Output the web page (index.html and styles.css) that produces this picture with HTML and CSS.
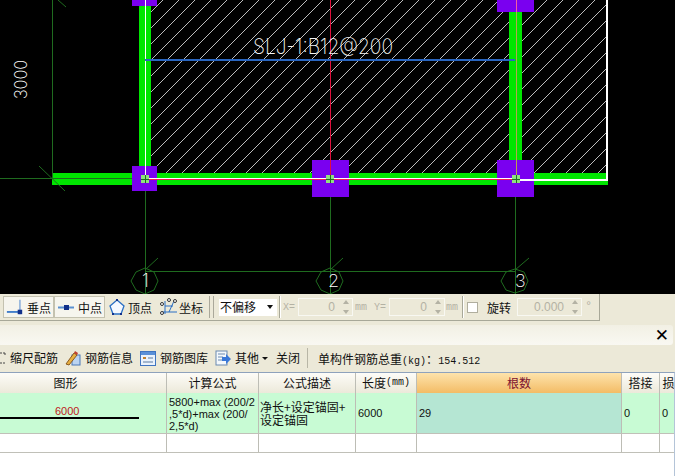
FILE: index.html
```html
<!DOCTYPE html>
<html lang="zh-CN">
<head>
<meta charset="utf-8">
<title>钢筋编辑</title>
<link rel="stylesheet" href="styles.css">
</head>
<body>
<div class="app">
  <svg class="cad" width="675" height="294" viewBox="0 0 675 294" xmlns="http://www.w3.org/2000/svg">
    <defs>
      <pattern id="hatch" width="16" height="16" patternUnits="userSpaceOnUse">
        <path d="M0 3 L3 0 M3 16 L16 3" stroke="#bcbcbc" stroke-width="1" fill="none"/>
      </pattern>
    </defs>
    <rect width="675" height="294" fill="#000"/>
    <rect x="151" y="0" width="456" height="173" fill="url(#hatch)"/>
    <rect x="139" y="0" width="12" height="180" fill="#00e600"/>
    <rect x="509" y="0" width="13" height="180" fill="#00e600"/>
    <rect x="52" y="173" width="556" height="12" fill="#00e600"/>
    <g stroke="#1f6b1f" stroke-width="1" fill="none" shape-rendering="crispEdges">
      <path d="M52.500 0V179M0 178.500H145M145.500 179V294M330.500 179V294M515.500 179V294M145 271.500H516"/>
    </g>
    <g stroke="#1f6b1f" stroke-width="1" fill="none">
      <path d="M39 166L65 191M58 0L66 7M145 270L158 258M330 270L343 258M515 270L529 258"/>
      <path d="M145 268l9 4 4 9-4 9-9 4-9-4-5-9 5-9zM330 268l9 4 4 9-4 9-9 4-9-4-5-9 5-9zM515 269l9 3 4 9-4 9-9 3-9-3-5-9 5-9z"/>
    </g>
    <rect x="132" y="0" width="25" height="6" fill="#7a00f0"/>
    <rect x="497" y="0" width="37" height="12" fill="#7a00f0"/>
    <rect x="132" y="166" width="25" height="25" fill="#7a00f0"/>
    <rect x="312" y="160" width="37" height="37" fill="#7a00f0"/>
    <rect x="497" y="160" width="37" height="37" fill="#7a00f0"/>
    <g shape-rendering="crispEdges" fill="none">
      <path d="M145.500 0V179" stroke="#fff"/>
      <path d="M330.500 0V179" stroke="#e0103c"/>
      <path d="M516.500 12V179" stroke="#b8a050"/>
      <path d="M516.500 0V12" stroke="#f060a0"/>
      <path d="M145 179.500H516" stroke="#f01850"/>
      <path d="M145 178.500H516" stroke="#fff"/>
      <path d="M520 179.500H608" stroke="#fff" stroke-width="2"/>
      <path d="M607 0V180" stroke="#fff" stroke-width="2"/>
      <path d="M145 60H515" stroke="#2a66c0" stroke-width="2"/>
    </g>
    <g fill="#90e080">
      <rect x="141" y="175" width="8" height="8"/>
      <rect x="326" y="175" width="8" height="8"/>
      <rect x="512" y="175" width="8" height="8"/>
    </g>
    <path d="M145 175V183M141 179H149M330 175V183M326 179H334M516 175V183M512 179H520" stroke="#1f6b1f" stroke-width="1" shape-rendering="crispEdges"/>
    <text class="cad-label" x="253" y="54" textLength="140" lengthAdjust="spacingAndGlyphs">SLJ-1:B12@200</text>
    <text class="cad-dim" transform="translate(27 99) rotate(-90)" textLength="39" lengthAdjust="spacingAndGlyphs">3000</text>
    <text class="cad-axis" x="142" y="287">1</text>
    <text class="cad-axis" x="328" y="287">2</text>
    <text class="cad-axis" x="515" y="287">3</text>
  </svg>

  <div class="snapbar">
    <div class="snaps">
      <button class="snap pressed">
        <svg width="20" height="18" viewBox="0 0 20 18"><path d="M1 14.500H17" stroke="#3a78c8" stroke-width="2"/><path d="M15.500 1V17" stroke="#7aa4d8" stroke-width="1.500"/><rect x="13" y="12" width="5" height="5" fill="#12308a"/></svg>
        <span>垂点</span>
      </button>
      <button class="snap pressed">
        <svg width="18" height="18" viewBox="0 0 18 18"><path d="M1 9.500H17" stroke="#5a90d0" stroke-width="2"/><rect x="7" y="7" width="5" height="5" fill="#12308a"/></svg>
        <span>中点</span>
      </button>
      <button class="snap spaced">
        <svg width="16" height="18" viewBox="0 0 16 18"><path d="M8 2L15 8 12 16H4L1 8z" fill="#f4f8ff" stroke="#2a6fc4" stroke-width="1.300"/><rect x="7" y="1" width="2" height="2" fill="#12308a"/><rect x="3" y="15" width="2" height="2" fill="#12308a"/><rect x="11" y="15" width="2" height="2" fill="#12308a"/></svg>
        <span>顶点</span>
      </button>
      <button class="snap spaced tight">
        <svg width="18" height="18" viewBox="0 0 18 18"><path d="M5 3V16M2 14H17M9 14L14 3M5 8H13" stroke="#2a6fc4" fill="none"/><circle cx="2" cy="6" r="1.500" fill="#fff" stroke="#333"/><circle cx="9" cy="2" r="1.500" fill="#fff" stroke="#333"/><circle cx="15" cy="3" r="1.500" fill="#fff" stroke="#333"/><circle cx="2" cy="15" r="1.500" fill="#fff" stroke="#333"/></svg>
        <span>坐标</span>
      </button>
    </div>
    <i class="grip"></i>
    <div class="combo"><span>不偏移</span><b class="combo-arrow"></b></div>
    <i class="sep"></i>
    <span class="dis lbl">X=</span>
    <div class="spin s-x"><span>0</span><em class="updown"></em></div>
    <span class="dis mm mm-a">mm</span>
    <span class="dis lbl">Y=</span>
    <div class="spin s-y"><span>0</span><em class="updown"></em></div>
    <span class="dis mm mm-b">mm</span>
    <i class="sep"></i>
    <i class="check"></i>
    <span class="rot">旋转</span>
    <div class="spin s-r"><span>0.000</span><em class="updown"></em></div>
    <span class="dis deg">°</span>
  </div>

  <div class="titlestrip"><span class="close">✕</span></div>

  <div class="actions">
    <svg class="ico-cut" width="7" height="14" viewBox="0 0 7 14"><path d="M0 2H5M5 2V5M0 12H5" stroke="#444" stroke-dasharray="2 1" fill="none"/></svg>
    <span class="act">缩尺配筋</span>
    <svg class="ico" width="16" height="16" viewBox="0 0 16 16"><rect x="7" y="5" width="8" height="10" fill="#bcd4f0" stroke="#4a78b8"/><path d="M1 14L9 3l3 2-8 10z" fill="#e8b040" stroke="#8a5a20"/><path d="M10 1l3 2-1 2-3-2z" fill="#c04030"/></svg>
    <span class="act">钢筋信息</span>
    <svg class="ico" width="16" height="15" viewBox="0 0 16 15"><rect x=".5" y=".5" width="15" height="14" fill="#eaf2fc" stroke="#3f74c0"/><rect x="1" y="1" width="14" height="3" fill="#5a90d8"/><rect x="3" y="6" width="3" height="2" fill="#c08030"/><path d="M3 11H13M8 7H13" stroke="#5a7aa0"/></svg>
    <span class="act">钢筋图库</span>
    <svg class="ico" width="16" height="16" viewBox="0 0 16 16"><rect x="1" y="1" width="11" height="14" fill="#f4f8fc" stroke="#6a8ab0"/><path d="M3 4H10M3 7H8M3 10H7" stroke="#6a8ab0"/><path d="M7 7H11V4L16 9 11 14V11H7z" fill="#3a78d8"/></svg>
    <span class="act">其他</span>
    <b class="drop"></b>
    <span class="act">关闭</span>
    <i class="sep2"></i>
    <span class="total">单构件钢筋总重<small>(kg)</small>：<small>154.512</small></span>
  </div>

  <div class="grid-wrap">
    <div class="row head">
      <div class="cell c0">图形</div>
      <div class="cell c1">计算公式</div>
      <div class="cell c2">公式描述</div>
      <div class="cell c3">长度<small>(mm)</small></div>
      <div class="cell c4 hot">根数</div>
      <div class="cell c5">搭接</div>
      <div class="cell c6">损耗</div>
    </div>
    <div class="row data">
      <div class="cell c0 shape"><span class="dim">6000</span><i class="bar"></i></div>
      <div class="cell c1 formula">5800+max (200/2<br>,5*d)+max (200/<br>2,5*d)</div>
      <div class="cell c2 desc">净长+设定锚固+<br>设定锚固</div>
      <div class="cell c3">6000</div>
      <div class="cell c4 active">29</div>
      <div class="cell c5">0</div>
      <div class="cell c6">0</div>
    </div>
    <div class="row empty">
      <div class="cell c0"></div>
      <div class="cell c1"></div>
      <div class="cell c2"></div>
      <div class="cell c3"></div>
      <div class="cell c4"></div>
      <div class="cell c5"></div>
      <div class="cell c6"></div>
    </div>
  </div>
</div>
</body>
</html>
```
FILE: styles.css
```css
* { box-sizing: border-box; }
html, body { margin: 0; padding: 0; background: #fff; }
body {
  width: 675px;
  height: 476px;
  overflow: hidden;
  font-family: "Noto Sans CJK SC", "Liberation Sans", sans-serif;
  font-size: 12px;
  color: #111;
}
.app { width: 675px; height: 476px; display: flex; flex-direction: column; background: #ece9d8; overflow: hidden; }

.cad { display: block; flex: none; }
.cad-label { font-family: "Inter", "DejaVu Sans", sans-serif; font-weight: 200; font-size: 21px; fill: #f4f4f4; }
.cad-dim { font-family: "Inter", "DejaVu Sans", sans-serif; font-weight: 200; font-size: 18px; fill: #fff; }
.cad-axis { font-family: "Inter", "DejaVu Sans", sans-serif; font-weight: 200; font-size: 18px; fill: #fff; }

.snapbar {
  flex: none;
  width: 600px;
  height: 27px;
  display: flex;
  align-items: center;
  padding-left: 3px;
  background: #ece9d8;
  border-right: 1px solid #a8a898;
  border-bottom: 1px solid #a8a898;
}
.snaps { display: flex; align-items: center; }
.snap {
  display: flex;
  align-items: center;
  gap: 3px;
  height: 22px;
  padding: 0 2px;
  border: 0;
  background: none;
  font: inherit;
  color: #111;
  white-space: nowrap;
}
.snap.pressed { width: 51px; background: #f6f5ee; border: 1px solid #c4c2b0; }
.snap.spaced { margin-left: 2px; }
.snap.tight { gap: 1px; margin-left: 4px; }
.grip { width: 5px; height: 22px; margin: 0 5px 0 4px; border-left: 1px solid #aaa89a; border-right: 1px solid #aaa89a; }
.combo { width: 58px; height: 17px; display: flex; align-items: center; background: #fff; }
.combo span { flex: 1; line-height: 14px; padding-left: 1px; }
.combo-arrow { width: 0; height: 0; margin-right: 4px; border: 3px solid transparent; border-top: 4px solid #111; border-bottom: 0; }
.sep { width: 2px; height: 22px; margin: 0 2px; border-left: 1px solid #a8a898; border-right: 1px solid #fff; }
.dis { color: #b4b2a4; font-family: "Liberation Mono", monospace; white-space: nowrap; }
.lbl { width: 15px; font-size: 10px; }
.mm { padding-left: 2px; font-size: 10px; }
.mm-a { width: 21px; }
.mm-b { width: 15px; padding-left: 1px; }
.deg { width: 14px; padding-left: 3px; }
.spin { height: 18px; display: flex; align-items: center; justify-content: flex-end; color: #b4b2a4; border: 1px solid #f8f8f2; font-family: "Liberation Sans", sans-serif; font-size: 12px; }
.s-x { width: 55px; }
.s-y { width: 56px; }
.s-r { width: 65px; margin-left: 6px; }
.updown { position: relative; width: 7px; height: 12px; margin: 0 2px 0 8px; }
.updown::before, .updown::after { content: ""; position: absolute; left: 0; border: 3px solid transparent; }
.updown::before { top: -1px; border-bottom: 4px solid #b4b2a4; border-top: 0; }
.updown::after { bottom: -1px; border-top: 4px solid #b4b2a4; border-bottom: 0; }
.sep + .check { margin-left: 1px; }
.check { width: 11px; height: 11px; margin-right: 9px; background: #fff; border: 1px solid #b0ae9e; }
.rot { width: 24px; white-space: nowrap; }

.titlestrip {
  flex: none;
  height: 20px;
  margin: 4px 2px 0 0;
  display: flex;
  align-items: center;
  justify-content: flex-end;
  padding-right: 4px;
  border-radius: 0 3px 3px 0;
  background: linear-gradient(#f2f0e4, #f9f8f2);
}
.close { font-family: "DejaVu Sans", sans-serif; font-size: 17px; line-height: 20px; font-weight: 700; color: #000; }

.actions { flex: none; height: 26px; display: flex; align-items: center; white-space: nowrap; }
.ico-cut { margin-right: 3px; flex: none; }
.ico { flex: none; margin: 0 4px 0 7px; }
.act { line-height: 16px; }
.drop { width: 0; height: 0; margin: 0 8px 0 3px; border: 3px solid transparent; border-top: 3px solid #111; border-bottom: 0; }
.sep2 { width: 1px; height: 20px; margin: 0 10px 0 7px; background: #b8b6a6; }
.total small, .c3 small { font-size: 10px; font-family: "Liberation Mono", monospace; }

.grid-wrap { flex: 1; background: #fff; border-top: 1px solid #8ea2bc; border-right: 1px solid #b4c4d8; overflow: hidden; margin-top: 1px; }
.row { display: grid; grid-template-columns: 202px 92px 97px 61px 205px 38px 30px; margin-left: -35px; width: 725px; }
.cell { border-right: 1px solid #bdbdb5; border-bottom: 1px solid #c0c0b8; overflow: hidden; white-space: nowrap; }
.head { height: 20px; }
.head .cell { display: flex; align-items: center; justify-content: center; background: linear-gradient(#fdfcf8, #ece9da); border-bottom: 0; line-height: 16px; }
.head .c4.hot { background: linear-gradient(#fde3ac, #f3bc66); color: #7a1030; }
.data { height: 41px; background: #c8fbd4; }
.data .cell { display: flex; align-items: center; padding-left: 2px; line-height: 12px; }
.data .cell.formula { display: block; padding-top: 3px; font-family: "Liberation Sans", sans-serif; font-size: 11px; line-height: 12px; }
.data .cell.desc { display: block; padding: 7px 0 0 1px; line-height: 13px; }
.data .cell.active { background: #b5e6d3; }
.data .cell.shape { display: block; position: relative; padding: 0; }
.dim { position: absolute; left: 90px; top: 12px; color: #c02020; font-family: "Liberation Sans", sans-serif; font-size: 11px; line-height: 12px; }
.bar { position: absolute; left: 0; right: 27px; top: 24px; height: 2px; background: #000; }
.data .c3, .data .c4, .data .c5, .data .c6 { font-family: "Liberation Sans", sans-serif; font-size: 11px; }
.empty { height: 19px; background: #fff; }
```
